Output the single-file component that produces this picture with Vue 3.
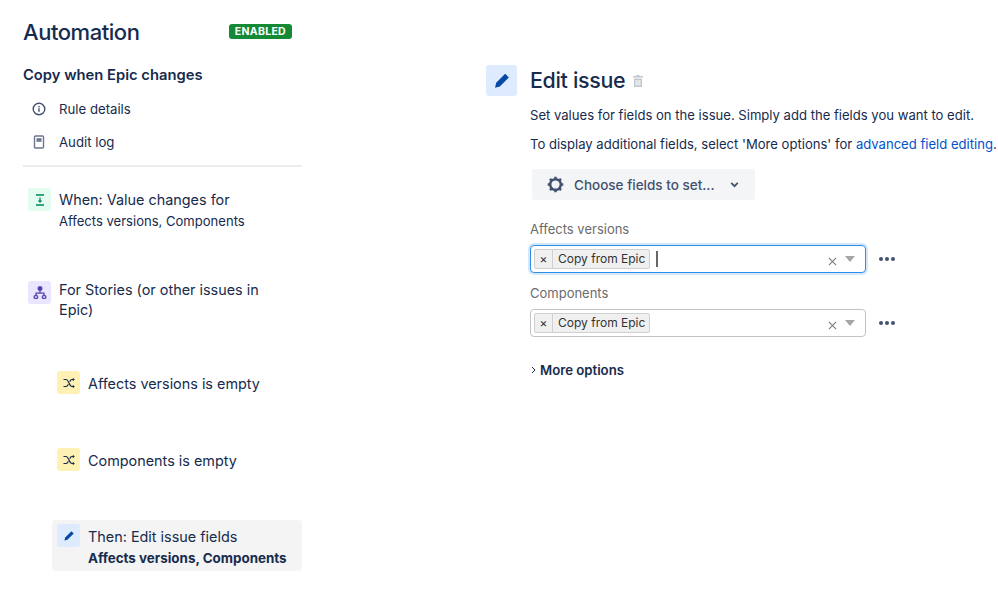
<template>
  <div class="page">
    <!-- left: rule outline -->
    <aside class="sidebar">
      <div class="title-row">
        <h1>Automation</h1>
        <span class="lozenge">ENABLED</span>
      </div>
      <h2>Copy when Epic changes</h2>
      <div class="nav-item first">
        <svg class="nav-icon" viewBox="0 0 16 16" fill="none">
          <circle cx="8" cy="8" r="5.8" stroke="#42526e" stroke-width="1.4" />
          <rect x="7.3" y="7.2" width="1.4" height="3.6" fill="#42526e" />
          <rect x="7.3" y="4.9" width="1.4" height="1.4" fill="#42526e" />
        </svg>
        <span>Rule details</span>
      </div>
      <div class="nav-item">
        <svg class="nav-icon" viewBox="0 0 16 16" fill="none">
          <rect x="3.5" y="2" width="9" height="12" rx="1" stroke="#6b778c" stroke-width="1.4" />
          <rect x="5.5" y="4.2" width="5" height="3.6" fill="#6b778c" />
        </svg>
        <span>Audit log</span>
      </div>
      <div class="divider"></div>

      <div class="step when">
        <span class="badge green">
          <svg viewBox="0 0 14 14" fill="none">
            <path d="M3 2h8M3 12h8" stroke="#00875a" stroke-width="1.3" />
            <path d="M7 4.5v4" stroke="#00875a" stroke-width="1.3" />
            <path d="M4.8 7.4h4.4L7 9.9z" fill="#00875a" />
          </svg>
        </span>
        <div class="step-text">
          <div>When: Value changes for</div>
          <div class="sub">Affects versions, Components</div>
        </div>
      </div>

      <div class="step branch">
        <span class="badge purple">
          <svg viewBox="0 0 14 14" fill="none" stroke="#5243aa" stroke-width="1.3">
            <rect x="5.2" y="1" width="3.6" height="3" rx="1" fill="#5243aa" />
            <path d="M7 4v3.2M3 9.5V7.2h8v2.3" />
            <rect x="1.2" y="9.6" width="3.4" height="2.8" rx="1" />
            <rect x="9.4" y="9.6" width="3.4" height="2.8" rx="1" />
          </svg>
        </span>
        <div class="step-text">For Stories (or other issues in Epic)</div>
      </div>

      <div class="step nested cond-first">
        <span class="badge yellow">
          <svg viewBox="0 0 14 14" fill="none" stroke="#172b4d" stroke-width="1.2">
            <path d="M1.5 3.5h2.6c2.6 0 3.2 7 5.8 7h2" />
            <path d="M1.5 10.5h2.6c1 0 1.7-1 2.3-2.2M7.7 5.6c.6-1.1 1.2-2.1 2.2-2.1h2" />
            <path d="M10.8 1.8l2 1.7-2 1.7zM10.8 8.8l2 1.7-2 1.7z" fill="#172b4d" stroke="none" />
          </svg>
        </span>
        <div class="step-text">Affects versions is empty</div>
      </div>

      <div class="step nested cond-second">
        <span class="badge yellow">
          <svg viewBox="0 0 14 14" fill="none" stroke="#172b4d" stroke-width="1.2">
            <path d="M1.5 3.5h2.6c2.6 0 3.2 7 5.8 7h2" />
            <path d="M1.5 10.5h2.6c1 0 1.7-1 2.3-2.2M7.7 5.6c.6-1.1 1.2-2.1 2.2-2.1h2" />
            <path d="M10.8 1.8l2 1.7-2 1.7zM10.8 8.8l2 1.7-2 1.7z" fill="#172b4d" stroke="none" />
          </svg>
        </span>
        <div class="step-text">Components is empty</div>
      </div>

      <div class="step then">
        <span class="badge blue">
          <svg viewBox="0 0 14 14">
            <path d="M9.4 2.3l2.3 2.3-6.3 6.2-3 .8.8-3z" fill="#0747a6" />
          </svg>
        </span>
        <div class="step-text">
          <div>Then: Edit issue fields</div>
          <div class="sub strong">Affects versions, Components</div>
        </div>
      </div>
    </aside>

    <!-- right: edit form -->
    <main class="editor">
      <div class="editor-head">
        <span class="head-badge">
          <svg viewBox="0 0 20 20">
            <path d="M13.2 2.8l3.6 3.6-9 9-4.8 1.3 1.2-4.9z" fill="#0747a6" />
          </svg>
        </span>
        <h3>Edit issue</h3>
        <svg class="trash" viewBox="0 0 12 14">
          <path d="M4.5 1h3v1H11v1.5H1V2h3.5zM2 4.5h8V13H2zM3.6 6v5.5h1V6zM5.5 6v5.5h1V6zM7.4 6v5.5h1V6z" fill="#c1c7d0" fill-rule="evenodd" />
        </svg>
      </div>
      <div class="editor-body">
        <p>Set values for fields on the issue. Simply add the fields you want to edit.</p>
        <p class="second">To display additional fields, select 'More options' for <a>advanced field editing</a>.</p>
        <div class="choose">
          <svg class="gear" viewBox="0 0 20 20" fill="none">
            <circle cx="10" cy="10" r="5.6" stroke="#42526e" stroke-width="2.6" />
            <path d="M10 1.8v3M10 15.2v3M1.8 10h3M15.2 10h3M4.2 4.2l2.1 2.1M13.7 13.7l2.1 2.1M15.8 4.2l-2.1 2.1M6.3 13.7l-2.1 2.1" stroke="#42526e" stroke-width="2.6" />
          </svg>
          <span>Choose fields to set...</span>
          <svg class="chev" viewBox="0 0 10 10" fill="none">
            <path d="M2 3.5l3 3 3-3" stroke="#42526e" stroke-width="1.6" />
          </svg>
        </div>

        <div v-for="f in fields" :key="f.label" class="field">
          <label>{{ f.label }}</label>
          <div class="field-row">
            <div class="select" :class="{ focused: f.focused }">
              <span class="tag"><span class="tag-x">×</span><span class="tag-label">Copy from Epic</span></span>
              <span v-if="f.focused" class="caret"></span>
              <svg class="clear" viewBox="0 0 10 10" fill="none">
                <path d="M1 1l8 8M9 1l-8 8" stroke="#808080" stroke-width="1.3" />
              </svg>
              <span class="arrow"></span>
            </div>
            <div class="dots"><i></i><i></i><i></i></div>
          </div>
        </div>

        <div class="more">
          <svg viewBox="0 0 8 10" fill="none">
            <path d="M2 2l3 3-3 3" stroke="#172b4d" stroke-width="1" />
          </svg>
          <span>More options</span>
        </div>
      </div>
    </main>
  </div>
</template>

<script setup>
const fields = [
  { label: 'Affects versions', focused: true },
  { label: 'Components', focused: false }
]
</script>

<style>
html, body {
  margin: 0;
  background: #fff;
}
</style>

<style scoped>
.page {
  width: 998px;
  height: 616px;
  overflow: hidden;
  display: flex;
  font-family: Inter, "Liberation Sans", sans-serif;
  color: #172b4d;
  box-sizing: border-box;
}

.sidebar {
  width: 279px;
  margin-left: 23px;
  flex-shrink: 0;
}

.title-row {
  display: flex;
  align-items: center;
  justify-content: space-between;
  height: 32px;
  margin-top: 15px;
  padding-right: 10px;
}

h1 {
  margin: 0;
  padding-top: 2px;
  font-size: 22px;
  font-weight: 500;
  letter-spacing: -0.45px;
}

.lozenge {
  background: #148a37;
  color: #fff;
  font-size: 10.5px;
  font-weight: 700;
  letter-spacing: 0.3px;
  line-height: 15px;
  padding: 0 6px;
  border-radius: 3px;
}

h2 {
  margin: 18px 0 0;
  font-size: 14.75px;
  line-height: 20px;
  font-weight: 600;
}

.nav-item {
  display: flex;
  align-items: center;
  height: 33px;
  padding-left: 8px;
  font-size: 13.2px;
}

.nav-item.first {
  margin-top: 7px;
}

.nav-icon {
  width: 16px;
  height: 16px;
  margin-right: 12px;
}

.divider {
  height: 2px;
  background: #ebecf0;
  margin-top: 7px;
}

.step {
  display: flex;
  font-size: 14.4px;
  line-height: 20px;
}

.step-text {
  flex: 1;
  min-width: 0;
}

.sub {
  font-size: 13.05px;
  line-height: 20px;
  margin-top: 1px;
}

.sub.strong {
  font-weight: 700;
  font-size: 13.4px;
}

.badge {
  width: 23px;
  height: 23px;
  border-radius: 3px;
  flex-shrink: 0;
  display: flex;
  align-items: center;
  justify-content: center;
  margin-right: 8px;
}

.badge svg {
  width: 14px;
  height: 14px;
}

.green { background: #e3fcef; }
.purple { background: #eae6ff; }
.yellow { background: #fff0b3; }
.blue { background: #deebff; }

.when {
  margin: 21px 0 0 5px;
}

.when .step-text {
  margin-top: 2px;
}

.branch {
  margin: 50px 0 0 5px;
  padding-right: 34px;
}

.branch .step-text {
  margin-top: -1px;
}

.nested {
  margin-left: 34px;
  align-items: center;
}

.nested .step-text {
  padding-top: 2px;
}

.cond-first {
  margin-top: 51px;
}

.cond-second {
  margin-top: 54px;
}

.then {
  margin: 49px 0 0 29px;
  background: #f4f4f5;
  border-radius: 4px;
  padding: 4px 5px 3px;
  height: 44px;
}

.then .step-text {
  margin-top: 3px;
}

.editor {
  margin-left: 184px;
  flex: 1;
  min-width: 0;
}

.editor-head {
  display: flex;
  align-items: center;
  margin-top: 65px;
}

.head-badge {
  width: 31px;
  height: 31px;
  background: #deebff;
  border-radius: 3px;
  display: flex;
  align-items: center;
  justify-content: center;
  margin-right: 13px;
}

.head-badge svg {
  width: 20px;
  height: 20px;
}

h3 {
  margin: -2px 0 0;
  font-size: 21.4px;
  font-weight: 500;
  letter-spacing: -0.3px;
}

.trash {
  width: 12px;
  height: 14px;
  margin-left: 7px;
  margin-top: 1px;
}

.editor-body {
  margin-left: 44px;
}

p {
  margin: 0;
  font-size: 13.08px;
  line-height: 20px;
  white-space: nowrap;
}

.editor-body > p:first-child {
  margin-top: 9px;
}

p.second {
  margin-top: 9px;
}

a {
  color: #0052cc;
}

.choose {
  display: flex;
  align-items: center;
  width: 223px;
  height: 31px;
  margin: 15px 0 20px 2px;
  background: #f4f5f7;
  border-radius: 3px;
  color: #42526e;
  font-size: 13.5px;
  font-weight: 500;
  box-sizing: border-box;
  padding-left: 14px;
}

.gear {
  width: 19px;
  height: 19px;
  margin-right: 9px;
}

.chev {
  width: 11px;
  height: 11px;
  margin-left: 14px;
}

.field label {
  display: block;
  color: #6b6b6b;
  font-size: 13px;
  line-height: 18px;
  margin-bottom: 7px;
}

.field + .field {
  margin-top: 11px;
}

.field-row {
  display: flex;
  align-items: center;
}

.select {
  position: relative;
  width: 336px;
  height: 28px;
  box-sizing: border-box;
  border: 1px solid #c4c4c4;
  border-radius: 4px;
  display: flex;
  align-items: center;
  padding-left: 3px;
  background: #fff;
}

.select.focused {
  border-color: #2f8fe8;
  box-shadow: 0 0 0 2px #d5e8fb;
}

.tag {
  display: flex;
  height: 20px;
  border: 1px solid #d0d0d0;
  border-radius: 2px;
  background: #f0f0f0;
  font-size: 12px;
  line-height: 18px;
  color: #333;
  box-sizing: border-box;
}

.tag-x {
  width: 17px;
  text-align: center;
  border-right: 1px solid #d0d0d0;
}

.tag-label {
  padding: 0 4px 0 5px;
}

.caret {
  width: 2px;
  height: 16px;
  background: #666;
  margin-left: 6px;
}

.clear {
  position: absolute;
  right: 28px;
  top: 11px;
  width: 9px;
  height: 9px;
}

.arrow {
  position: absolute;
  right: 10px;
  top: 10px;
  width: 0;
  height: 0;
  border-left: 5px solid transparent;
  border-right: 5px solid transparent;
  border-top: 6px solid #a6a6a6;
}

.dots {
  display: flex;
  gap: 2px;
  margin-left: 13px;
}

.dots i {
  width: 4px;
  height: 4px;
  border-radius: 50%;
  background: #42526e;
}

.more {
  display: flex;
  align-items: center;
  margin-top: 23px;
  font-size: 13.2px;
  font-weight: 600;
  line-height: 20px;
}

.more svg {
  width: 8px;
  height: 10px;
  margin-right: 2px;
}
</style>
